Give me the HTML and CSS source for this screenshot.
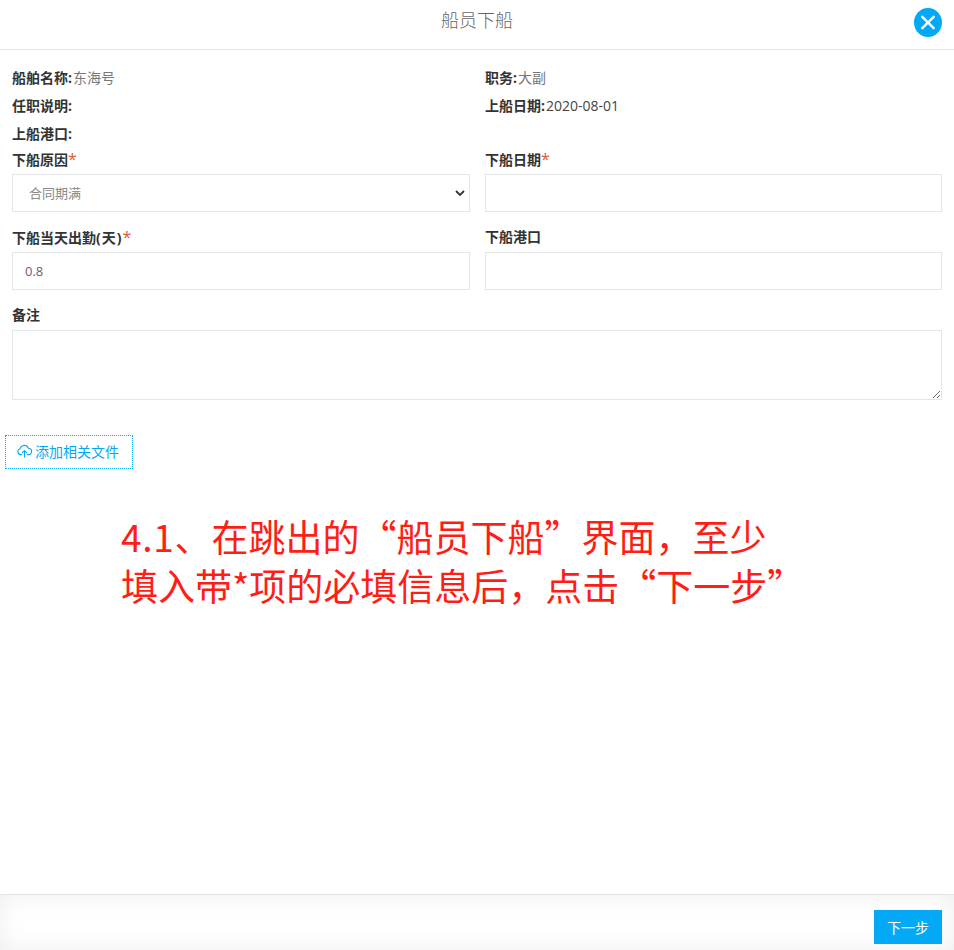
FILE: index.html
```html
<!DOCTYPE html>
<html lang="zh-CN">
<head>
<meta charset="utf-8">
<title>船员下船</title>
<link rel="stylesheet" href="styles.css">
</head>
<body>
<div class="page">
  <header class="header">
    <h1 class="title">船员下船</h1>
    <button class="close" type="button" aria-label="关闭">
      <svg width="28" height="29" viewBox="0 0 28 29"><ellipse cx="14" cy="14.5" rx="14" ry="14.5" fill="#03a9f4"/><path d="M8.3 8.8 19.7 20.2M19.7 8.8 8.3 20.2" stroke="#fff" stroke-width="2.4" stroke-linecap="round"/></svg>
    </button>
  </header>
  <main class="content">
    <div class="info">
      <div class="info-item"><b>船舶名称:</b><span class="muted">东海号</span></div>
      <div class="info-item"><b>职务:</b><span class="muted">大副</span></div>
      <div class="info-item"><b>任职说明:</b></div>
      <div class="info-item"><b>上船日期:</b><span class="dark">2020-08-01</span></div>
      <div class="info-item"><b>上船港口:</b></div>
    </div>
    <div class="form">
      <div class="field">
        <label class="label">下船原因<i class="req">*</i></label>
        <select class="control select"><option>合同期满</option></select>
      </div>
      <div class="field">
        <label class="label">下船日期<i class="req">*</i></label>
        <input class="control" type="text">
      </div>
      <div class="field">
        <label class="label">下船当天出勤<span class="paren">(天)</span><i class="req">*</i></label>
        <input class="control" type="text" value="0.8">
      </div>
      <div class="field">
        <label class="label">下船港口</label>
        <input class="control" type="text">
      </div>
      <div class="field wide">
        <label class="label">备注</label>
        <textarea class="control area"></textarea>
      </div>
    </div>
    <button class="upload" type="button">
      <svg width="15" height="14" viewBox="0 0 15 14" fill="none" stroke="#03a9f4" stroke-width="1.1" stroke-linecap="round" stroke-linejoin="round"><path d="M4.6 10.6H3.6A3 3 0 0 1 3.1 4.7 4.3 4.3 0 0 1 11.3 4.2 3.2 3.2 0 0 1 11.4 10.6H10.4"/><path d="M7.5 13V6.8M5.4 8.7 7.5 6.6 9.6 8.7"/></svg>
      <span>添加相关文件</span>
    </button>
  </main>
  <footer class="footer">
    <button class="next" type="button">下一步</button>
  </footer>
  <p class="note"><span class="num">4.1</span>、在跳出的“船员下船”界面，至少<br>填入带*项的必填信息后，点击“下一步”</p>
</div>
</body>
</html>
```
FILE: styles.css
```css
* { box-sizing: border-box; }
html, body { margin: 0; padding: 0; background: #fff; }
body {
  font-family: "Open Sans", "Noto Sans CJK SC", sans-serif;
  font-size: 14px;
  color: #333;
}
.page {
  position: relative;
  width: 954px;
  height: 950px;
  display: flex;
  flex-direction: column;
  overflow: hidden;
}
.header {
  position: relative;
  flex: none;
  height: 50px;
  border-bottom: 1px solid #e5e5e5;
  display: flex;
  justify-content: center;
}
.title {
  margin: 0;
  font-size: 18px;
  font-weight: 300;
  line-height: 41px;
  color: #666;
}
.close {
  position: absolute;
  top: 8px;
  right: 12px;
  width: 28px;
  height: 29px;
  padding: 0;
  border: 0;
  background: none;
  display: block;
}
.close svg { display: block; }
.content {
  flex: 1;
  padding: 14px 12px 0;
}
.info {
  display: grid;
  grid-template-columns: 458px 457px;
  column-gap: 15px;
}
.info-item {
  height: 28px;
  line-height: 28px;
  font-size: 14px;
  white-space: nowrap;
}
.info-item b { font-weight: 700; color: #333; margin-right: 1px; }
.muted { color: #777; }
.dark { color: #444; }
.form {
  display: grid;
  grid-template-columns: 458px 457px;
  column-gap: 15px;
  row-gap: 15px;
  margin-top: 1px;
}
.field { display: flex; flex-direction: column; }
.wide { grid-column: 1 / -1; }
.label {
  height: 25px;
  line-height: 20px;
  font-size: 14px;
  font-weight: 700;
  color: #333;
}
.paren { letter-spacing: 1px; }
.req {
  font-style: normal;
  font-weight: 400;
  font-size: 16px;
  color: #e4572e;
}
.control {
  display: block;
  width: 100%;
  height: 38px;
  margin: 0;
  padding: 0 12px;
  border: 1px solid #e5e6e7;
  border-radius: 0;
  background: #fff;
  font-family: inherit;
  font-size: 13px;
  color: #666;
  outline: none;
}
.select {
  appearance: none;
  padding-left: 16px;
  color: #888;
  background: #fff url("data:image/svg+xml,%3Csvg xmlns='http://www.w3.org/2000/svg' width='10' height='6' viewBox='0 0 10 6'%3E%3Cpath d='M1 1l4 4 4-4' fill='none' stroke='%23333' stroke-width='1.8'/%3E%3C/svg%3E") no-repeat right 4px center;
}
.area { height: 70px; padding: 6px 12px; }
.upload {
  display: flex;
  align-items: center;
  gap: 3px;
  width: 128px;
  height: 34px;
  margin: 35px 0 0 -7px;
  padding: 0 0 2px 11px;
  border: 1px dotted #03a9f4;
  background: #fff;
  font-family: inherit;
  font-size: 14px;
  color: #03a9f4;
}
.upload svg { flex: none; }
.footer {
  flex: none;
  height: 56px;
  border-top: 1px solid #e3e3e3;
  background: #fff;
  box-shadow: inset 0 0 24px rgba(0, 0, 0, 0.07);
  display: flex;
  justify-content: flex-end;
  padding: 15px 12px 0;
}
.next {
  width: 68px;
  height: 34px;
  padding: 0;
  border: 0;
  background: #03a9f4;
  color: #fff;
  font-family: inherit;
  font-size: 14px;
}
.note {
  position: absolute;
  left: 121px;
  top: 512px;
  margin: 0;
  font-family: "Noto Sans CJK SC", sans-serif;
  font-size: 37px;
  line-height: 49px;
  color: #ff1d15;
  white-space: nowrap;
}
.num { letter-spacing: 0.7px; }
```
